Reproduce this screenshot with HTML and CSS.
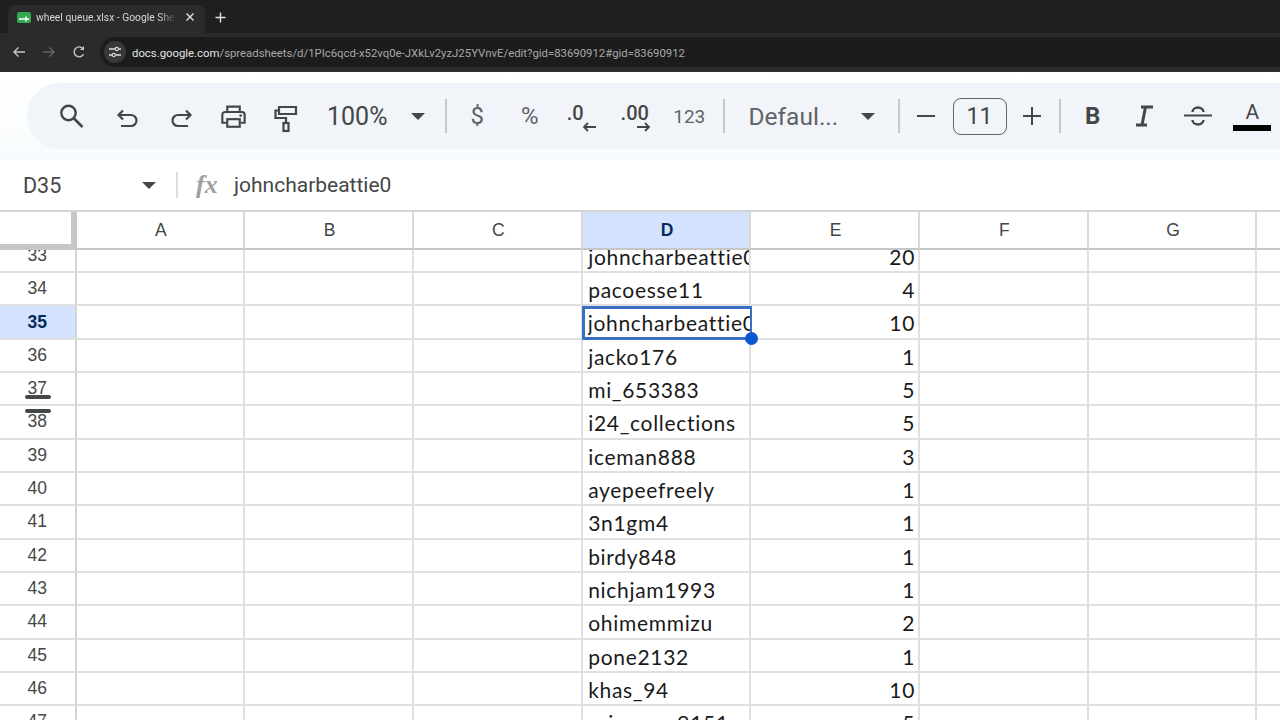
FILE: index.html
```html
<!DOCTYPE html>
<html>

<head>
    <title>wheel queue.xlsx - Google Sheets</title>
    <link rel="stylesheet" href="styles.css">
</head>

<body>
    <div class="tabstrip">
        <div class="tab">
            <svg class="tab-icon" width="14" height="11" viewBox="0 0 14 11">
                <rect width="14" height="11" rx="2" fill="#34a853" />
                <path d="M2 7h7M9 4.500v5M9 7h3" stroke="#fff" stroke-width="1.500" fill="none" />
            </svg>
            <span class="tab-title">wheel queue.xlsx - Google Shee</span>
            <svg class="tab-close" width="10" height="10" viewBox="0 0 10 10">
                <path d="M1.500 1.500l7 7M8.500 1.500l-7 7" stroke="#e3e3e3" stroke-width="1.400" />
            </svg>
        </div>
        <svg class="new-tab" width="11" height="11" viewBox="0 0 11 11">
            <path d="M5.500 .5v10M.5 5.500h10" stroke="#e3e3e3" stroke-width="1.400" />
        </svg>
    </div>

    <div class="navbar">
        <svg class="nav-icon" width="14" height="14" viewBox="0 0 14 14">
            <path d="M13 7H2M6.500 2.500L2 7l4.500 4.500" stroke="#c7c7c7" stroke-width="1.400" fill="none" />
        </svg>
        <svg class="nav-icon" width="14" height="14" viewBox="0 0 14 14">
            <path d="M1 7h11M7.500 2.500L12 7l-4.500 4.500" stroke="#666" stroke-width="1.400" fill="none" />
        </svg>
        <svg class="nav-icon" width="14" height="14" viewBox="0 0 14 14">
            <path d="M11.600 9.200A5 5 0 1 1 11 3.600" stroke="#c7c7c7" stroke-width="1.400" fill="none" />
            <path d="M12 1v4H8z" fill="#c7c7c7" />
        </svg>
        <div class="urlbar">
            <span class="site-icon">
                <svg width="14" height="12" viewBox="0 0 14 12">
                    <path d="M1 3h6M10.500 3H13M1 9h3M8 9h5" stroke="#ddd" stroke-width="1.300" fill="none" />
                    <circle cx="8.800" cy="3" r="1.600" stroke="#ddd" stroke-width="1.100" fill="none" />
                    <circle cx="5.800" cy="9" r="1.600" stroke="#ddd" stroke-width="1.100" fill="none" />
                </svg>
            </span>
            <span class="url"><b>docs.google.com</b>/spreadsheets/d/1PIc6qcd-x52vq0e-JXkLv2yzJ25YVnvE/edit?gid=83690912#gid=83690912</span>
        </div>
    </div>

    <div class="toolbar">
        <div class="tools">
            <div class="tool search-tool">
                <svg width="28" height="28" viewBox="0 0 28 28">
                    <circle cx="11.500" cy="11" r="7.200" stroke="#444746" stroke-width="2.400" fill="none" />
                    <path d="M16.500 16l9 9" stroke="#444746" stroke-width="2.600" fill="none" />
                </svg>
            </div>
            <div class="tool">
                <svg width="26" height="26" viewBox="0 0 26 26">
                    <path d="M8 7.500L3.500 12 8 16.500M4 12h12a5.500 5.500 0 0 1 0 11H6" stroke="#444746" stroke-width="2.200" fill="none" />
                </svg>
            </div>
            <div class="tool">
                <svg width="26" height="26" viewBox="0 0 26 26">
                    <path d="M18 7.500l4.500 4.500-4.500 4.500M22 12H10a5.500 5.500 0 0 0 0 11h10" stroke="#444746" stroke-width="2.200" fill="none" />
                </svg>
            </div>
            <div class="tool">
                <svg class="print-icon" width="27" height="25" viewBox="0 0 30 28">
                    <path d="M8 9V3h14v6M7 21H2.500V12a3 3 0 0 1 3-3h19a3 3 0 0 1 3 3v9H23" stroke="#444746" stroke-width="2.400" fill="none" />
                    <rect x="8" y="17" width="14" height="8.500" stroke="#444746" stroke-width="2.400" fill="none" />
                    <circle cx="23" cy="13" r="1.500" fill="#444746" />
                </svg>
            </div>
            <div class="tool">
                <svg class="paint-icon" width="24" height="28" viewBox="0 0 24 28">
                    <path d="M5 2h17v7H5zM5 5.500H1.500V13H12v5" stroke="#444746" stroke-width="2.200" fill="none" />
                    <rect x="9.500" y="18" width="5" height="8" stroke="#444746" stroke-width="2.200" fill="none" />
                </svg>
            </div>
            <div class="zoom-select">100%</div>
            <div class="caret zoom-caret"></div>
            <div class="sep zoom-sep"></div>
            <div class="tool text-tool dollar-tool">$</div>
            <div class="tool text-tool">%</div>
            <div class="tool dec-tool"><span class="dec-num dec-short">.0</span>
                <svg class="dec-arrow" width="16" height="10" viewBox="0 0 16 10">
                    <path d="M14 5H2M6 1L2 5l4 4" stroke="#444746" stroke-width="1.800" fill="none" />
                </svg>
            </div>
            <div class="tool dec-tool"><span class="dec-num">.00</span>
                <svg class="dec-arrow" width="16" height="10" viewBox="0 0 16 10">
                    <path d="M2 5h12M10 1l4 4-4 4" stroke="#444746" stroke-width="1.800" fill="none" />
                </svg>
            </div>
            <div class="tool num-tool">123</div>
            <div class="sep num-sep"></div>
            <div class="font-select">Defaul...</div>
            <div class="caret font-caret"></div>
            <div class="sep font-sep"></div>
            <div class="tool size-btn">
                <svg width="18" height="18" viewBox="0 0 18 18"><path d="M0 9h18" stroke="#444746" stroke-width="2" /></svg>
            </div>
            <div class="size-box">11</div>
            <div class="tool size-btn">
                <svg width="18" height="18" viewBox="0 0 18 18"><path d="M0 9h18M9 0v18" stroke="#444746" stroke-width="2" /></svg>
            </div>
            <div class="sep size-sep"></div>
            <div class="tool bold-tool">B</div>
            <div class="tool">
                <svg width="18" height="22" viewBox="0 0 18 22">
                    <path d="M5 2h12M9.500 2L6 20M0 20h11" stroke="#444746" stroke-width="3" fill="none" />
                </svg>
            </div>
            <div class="tool">
                <svg width="28" height="22" viewBox="0 0 28 22">
                    <path d="M0 10.500h28" stroke="#444746" stroke-width="2" />
                    <path d="M8.500 7a5.500 4.500 0 0 1 11 0M8.500 15a5.500 4.500 0 0 0 11 0" stroke="#444746" stroke-width="2.400" fill="none" />
                </svg>
            </div>
            <div class="tool color-tool">
                <span class="color-letter">A</span>
                <span class="color-bar"></span>
            </div>
        </div>
    </div>

    <div class="formula-bar">
        <div class="name-box">D35</div>
        <div class="caret name-caret"></div>
        <div class="formula-sep"></div>
        <div class="fx">fx</div>
        <div class="formula-text">johncharbeattie0</div>
    </div>

    <div class="sheet">
        <div class="row head-row">
            <div class="corner"></div>
            <div class="col-head">A</div>
            <div class="col-head">B</div>
            <div class="col-head">C</div>
            <div class="col-head col-active">D</div>
            <div class="col-head">E</div>
            <div class="col-head">F</div>
            <div class="col-head">G</div>
            <div class="col-head"></div>
        </div>

        <div class="row first-row">
            <div class="row-head">33</div><div class="cell"></div><div class="cell"></div><div class="cell"></div>
            <div class="cell">johncharbeattie0</div><div class="cell num">20</div><div class="cell"></div><div class="cell"></div><div class="cell"></div>
        </div>
        <div class="row">
            <div class="row-head">34</div><div class="cell"></div><div class="cell"></div><div class="cell"></div>
            <div class="cell">pacoesse11</div><div class="cell num">4</div><div class="cell"></div><div class="cell"></div><div class="cell"></div>
        </div>
        <div class="row">
            <div class="row-head row-active">35</div><div class="cell"></div><div class="cell"></div><div class="cell"></div>
            <div class="cell cell-selected"><div class="cell-clip">johncharbeattie0</div><span class="fill-handle"></span></div><div class="cell num">10</div><div class="cell"></div><div class="cell"></div><div class="cell"></div>
        </div>
        <div class="row">
            <div class="row-head">36</div><div class="cell"></div><div class="cell"></div><div class="cell"></div>
            <div class="cell">jacko176</div><div class="cell num">1</div><div class="cell"></div><div class="cell"></div><div class="cell"></div>
        </div>
        <div class="row">
            <div class="row-head row-drag">37</div><div class="cell"></div><div class="cell"></div><div class="cell"></div>
            <div class="cell">mi_653383</div><div class="cell num">5</div><div class="cell"></div><div class="cell"></div><div class="cell"></div>
        </div>
        <div class="row">
            <div class="row-head row-drag-below">38</div><div class="cell"></div><div class="cell"></div><div class="cell"></div>
            <div class="cell">i24_collections</div><div class="cell num">5</div><div class="cell"></div><div class="cell"></div><div class="cell"></div>
        </div>
        <div class="row">
            <div class="row-head">39</div><div class="cell"></div><div class="cell"></div><div class="cell"></div>
            <div class="cell">iceman888</div><div class="cell num">3</div><div class="cell"></div><div class="cell"></div><div class="cell"></div>
        </div>
        <div class="row">
            <div class="row-head">40</div><div class="cell"></div><div class="cell"></div><div class="cell"></div>
            <div class="cell">ayepeefreely</div><div class="cell num">1</div><div class="cell"></div><div class="cell"></div><div class="cell"></div>
        </div>
        <div class="row">
            <div class="row-head">41</div><div class="cell"></div><div class="cell"></div><div class="cell"></div>
            <div class="cell">3n1gm4</div><div class="cell num">1</div><div class="cell"></div><div class="cell"></div><div class="cell"></div>
        </div>
        <div class="row">
            <div class="row-head">42</div><div class="cell"></div><div class="cell"></div><div class="cell"></div>
            <div class="cell">birdy848</div><div class="cell num">1</div><div class="cell"></div><div class="cell"></div><div class="cell"></div>
        </div>
        <div class="row">
            <div class="row-head">43</div><div class="cell"></div><div class="cell"></div><div class="cell"></div>
            <div class="cell">nichjam1993</div><div class="cell num">1</div><div class="cell"></div><div class="cell"></div><div class="cell"></div>
        </div>
        <div class="row">
            <div class="row-head">44</div><div class="cell"></div><div class="cell"></div><div class="cell"></div>
            <div class="cell">ohimemmizu</div><div class="cell num">2</div><div class="cell"></div><div class="cell"></div><div class="cell"></div>
        </div>
        <div class="row">
            <div class="row-head">45</div><div class="cell"></div><div class="cell"></div><div class="cell"></div>
            <div class="cell">pone2132</div><div class="cell num">1</div><div class="cell"></div><div class="cell"></div><div class="cell"></div>
        </div>
        <div class="row">
            <div class="row-head">46</div><div class="cell"></div><div class="cell"></div><div class="cell"></div>
            <div class="cell">khas_94</div><div class="cell num">10</div><div class="cell"></div><div class="cell"></div><div class="cell"></div>
        </div>
        <div class="row">
            <div class="row-head">47</div><div class="cell"></div><div class="cell"></div><div class="cell"></div>
            <div class="cell">ericgame9151</div><div class="cell num">5</div><div class="cell"></div><div class="cell"></div><div class="cell"></div>
        </div>
    </div>
</body>

</html>
```

FILE: styles.css
```css
html,
body {
    height: 720px;
    overflow: hidden;
}

body {
    margin: 0;
    background-color: #ffffff;
    font-family: Roboto, sans-serif;
    color: #444746;
}

/* browser chrome */
.tabstrip {
    height: 33px;
    box-sizing: border-box;
    padding: 5px 0 0 8px;
    display: flex;
    align-items: flex-start;
    background-color: #1f1f1f;
}

.tab {
    width: 197px;
    height: 28px;
    box-sizing: border-box;
    padding: 0 10px 4px 9px;
    display: flex;
    align-items: center;
    background-color: #2b2b2b;
    border-radius: 8px 8px 0 0;
}

.tab-title {
    width: 140px;
    margin-left: 5px;
    font-size: 10.300px;
    color: #d6d6d6;
    white-space: nowrap;
    overflow: hidden;
    mask-image: linear-gradient(to right, #000 88%, transparent);
}

.tab-close {
    margin-left: auto;
}

.new-tab {
    margin: 7px 0 0 10px;
}

.navbar {
    height: 39px;
    box-sizing: border-box;
    padding: 3px 0 4px 12px;
    display: flex;
    align-items: center;
    background-color: #2b2b2b;
}

.nav-icon {
    margin-right: 16px;
}

.urlbar {
    flex: 1;
    height: 30px;
    margin-left: -2px;
    display: flex;
    align-items: center;
    background-color: #1c1c1c;
    border-radius: 15px 0 0 15px;
}

.site-icon {
    width: 22px;
    height: 22px;
    margin-left: 4px;
    display: flex;
    align-items: center;
    justify-content: center;
    background-color: #383838;
    border-radius: 50%;
}

.url {
    margin: 2px 0 0 6px;
    font-size: 11.350px;
    color: #a8a8a8;
    white-space: nowrap;
}

.url b {
    font-weight: 400;
    color: #e3e3e3;
}

/* sheets toolbar */
.toolbar {
    height: 88px;
    box-sizing: border-box;
    padding: 11px 0 11px 27px;
    background: linear-gradient(to bottom, #ffffff, #f8fbfd);
}

.tools {
    height: 66px;
    box-sizing: border-box;
    padding-left: 18px;
    display: flex;
    align-items: center;
    background-color: #f1f5f9;
    border-radius: 33px 0 0 33px;
    overflow: hidden;
}

.tool {
    width: 52.500px;
    height: 44px;
    flex: none;
    display: flex;
    align-items: center;
    justify-content: center;
}

.search-tool {
    margin-right: 4.500px;
}

.print-icon {
    margin-top: 1px;
}

.paint-icon {
    margin-top: 5px;
}

.zoom-select {
    margin-left: 15px;
    font-size: 25px;
    width: 64px;
    flex: none;
}

.caret {
    width: 0;
    height: 0;
    flex: none;
    border-left: 7px solid transparent;
    border-right: 7px solid transparent;
    border-top: 7px solid #444746;
}

.zoom-caret {
    margin-left: 20px;
}

.sep {
    width: 2px;
    height: 34px;
    flex: none;
    background-color: #c7c7c7;
}

.zoom-sep {
    margin-left: 20px;
}

.text-tool {
    font-size: 24px;
    color: #5f6368;
}

.dollar-tool {
    margin-left: 4px;
}

.dec-tool {
    position: relative;
    font-size: 20px;
    font-weight: 500;
    align-items: flex-start;
}

.dec-num {
    margin-top: 7px;
}

.dec-short {
    margin-right: 14px;
}

.dec-arrow {
    position: absolute;
    left: 26px;
    top: 28px;
}

.num-tool {
    font-size: 19px;
    color: #5f6368;
    margin-left: 2px;
}

.num-sep {
    margin-left: 7px;
}

.font-select {
    width: 112px;
    flex: none;
    margin-left: 24px;
    font-size: 24.500px;
    color: #5f6368;
    white-space: nowrap;
}

.font-sep {
    margin-left: 23px;
}

.size-btn {
    width: 52px;
}

.size-box {
    width: 54px;
    height: 37px;
    flex: none;
    margin: 0 -1px 0 1px;
    display: flex;
    align-items: center;
    justify-content: center;
    border: 1px solid #5f6368;
    border-radius: 8px;
    font-size: 23px;
    box-sizing: border-box;
}

.size-sep {
    margin-left: 1px;
}

.bold-tool {
    font-size: 24px;
    font-weight: 700;
    margin-left: 6px;
}

.color-tool {
    position: relative;
    margin-left: 2px;
    flex-direction: column;
}

.color-letter {
    font-size: 21px;
    line-height: 24px;
    margin-top: -2px;
}

.color-bar {
    width: 38px;
    height: 6px;
    margin-top: 1px;
    background-color: #000000;
}

/* formula bar */
.formula-bar {
    height: 50px;
    box-sizing: border-box;
    padding-left: 23px;
    display: flex;
    align-items: center;
    background-color: #ffffff;
}

.name-box {
    width: 119px;
    font-size: 21.500px;
}

.formula-sep {
    width: 2px;
    height: 26px;
    margin-left: 20px;
    background-color: #dadce0;
}

.fx {
    width: 38px;
    margin-left: 18px;
    font-family: "Liberation Serif", serif;
    font-size: 26px;
    font-style: italic;
    font-weight: 700;
    color: #a0a0a0;
}

.formula-text {
    font-size: 21px;
}

/* grid */
.sheet {
    border-top: 2px solid #d4d4d4;
}

.row {
    height: 33.330px;
    box-sizing: border-box;
    display: grid;
    grid-template-columns: 76.600px repeat(8, 168.700px);
}

.head-row {
    height: 38px;
}

.first-row {
    height: 23px;
}

.corner {
    box-sizing: border-box;
    background-color: #ffffff;
    border-right: 6px solid #c7c7c7;
    border-bottom: 6px solid #c7c7c7;
}

.col-head {
    display: flex;
    align-items: center;
    justify-content: center;
    box-sizing: border-box;
    padding-left: 2px;
    border-right: 2px solid #d9d9d9;
    border-bottom: 2px solid #c4c7c5;
    font-family: "Liberation Sans", sans-serif;
    font-size: 17.500px;
    color: #444746;
}

.col-active {
    background-color: #d3e3fd;
    font-weight: 700;
    color: #0b2a5c;
}

.row-head {
    position: relative;
    display: flex;
    align-items: center;
    justify-content: center;
    box-sizing: border-box;
    border-right: 2px solid #d4d4d4;
    border-bottom: 2px solid #e0e0e0;
    font-family: "Liberation Sans", sans-serif;
    font-size: 17.500px;
}

.first-row .row-head {
    align-items: flex-end;
    overflow: hidden;
    line-height: 14px;
    padding-bottom: 9px;
}

.row-active {
    background-color: #d3e3fd;
    font-weight: 700;
    color: #0b2a5c;
}

.row-drag::after,
.row-drag-below::before {
    content: "";
    position: absolute;
    left: 25px;
    width: 26px;
    height: 4px;
    background-color: #444746;
    border-radius: 2px;
}

.row-drag::after {
    bottom: 5px;
}

.row-drag-below::before {
    top: 3px;
}

.cell {
    position: relative;
    box-sizing: border-box;
    padding: 4px 0 0 5.500px;
    border-right: 2px solid #e0e0e0;
    border-bottom: 2px solid #e0e0e0;
    font-family: Lato, sans-serif;
    font-size: 21px;
    letter-spacing: 0.700px;
    line-height: 26px;
    color: #1a1a1a;
    white-space: nowrap;
    overflow: hidden;
}

.first-row .cell {
    padding-top: 0;
    padding-bottom: 7px;
    line-height: 14px;
    display: flex;
    align-items: flex-end;
}

.num {
    padding: 4px 3px 0 0;
    text-align: right;
}

.first-row .num {
    justify-content: flex-end;
    padding-top: 0;
}

.cell-selected {
    overflow: visible;
    margin-left: -1px;
    padding: 1px 0 0 3px;
    border: 3px solid #3b6fc6;
    border-right-width: 2px;
    height: 34px;
    width: 170px;
    z-index: 2;
}

.cell-clip {
    overflow: hidden;
}

.fill-handle {
    position: absolute;
    right: -8px;
    bottom: -8px;
    width: 13px;
    height: 13px;
    background-color: #0b57d0;
    border-radius: 50%;
}
```
